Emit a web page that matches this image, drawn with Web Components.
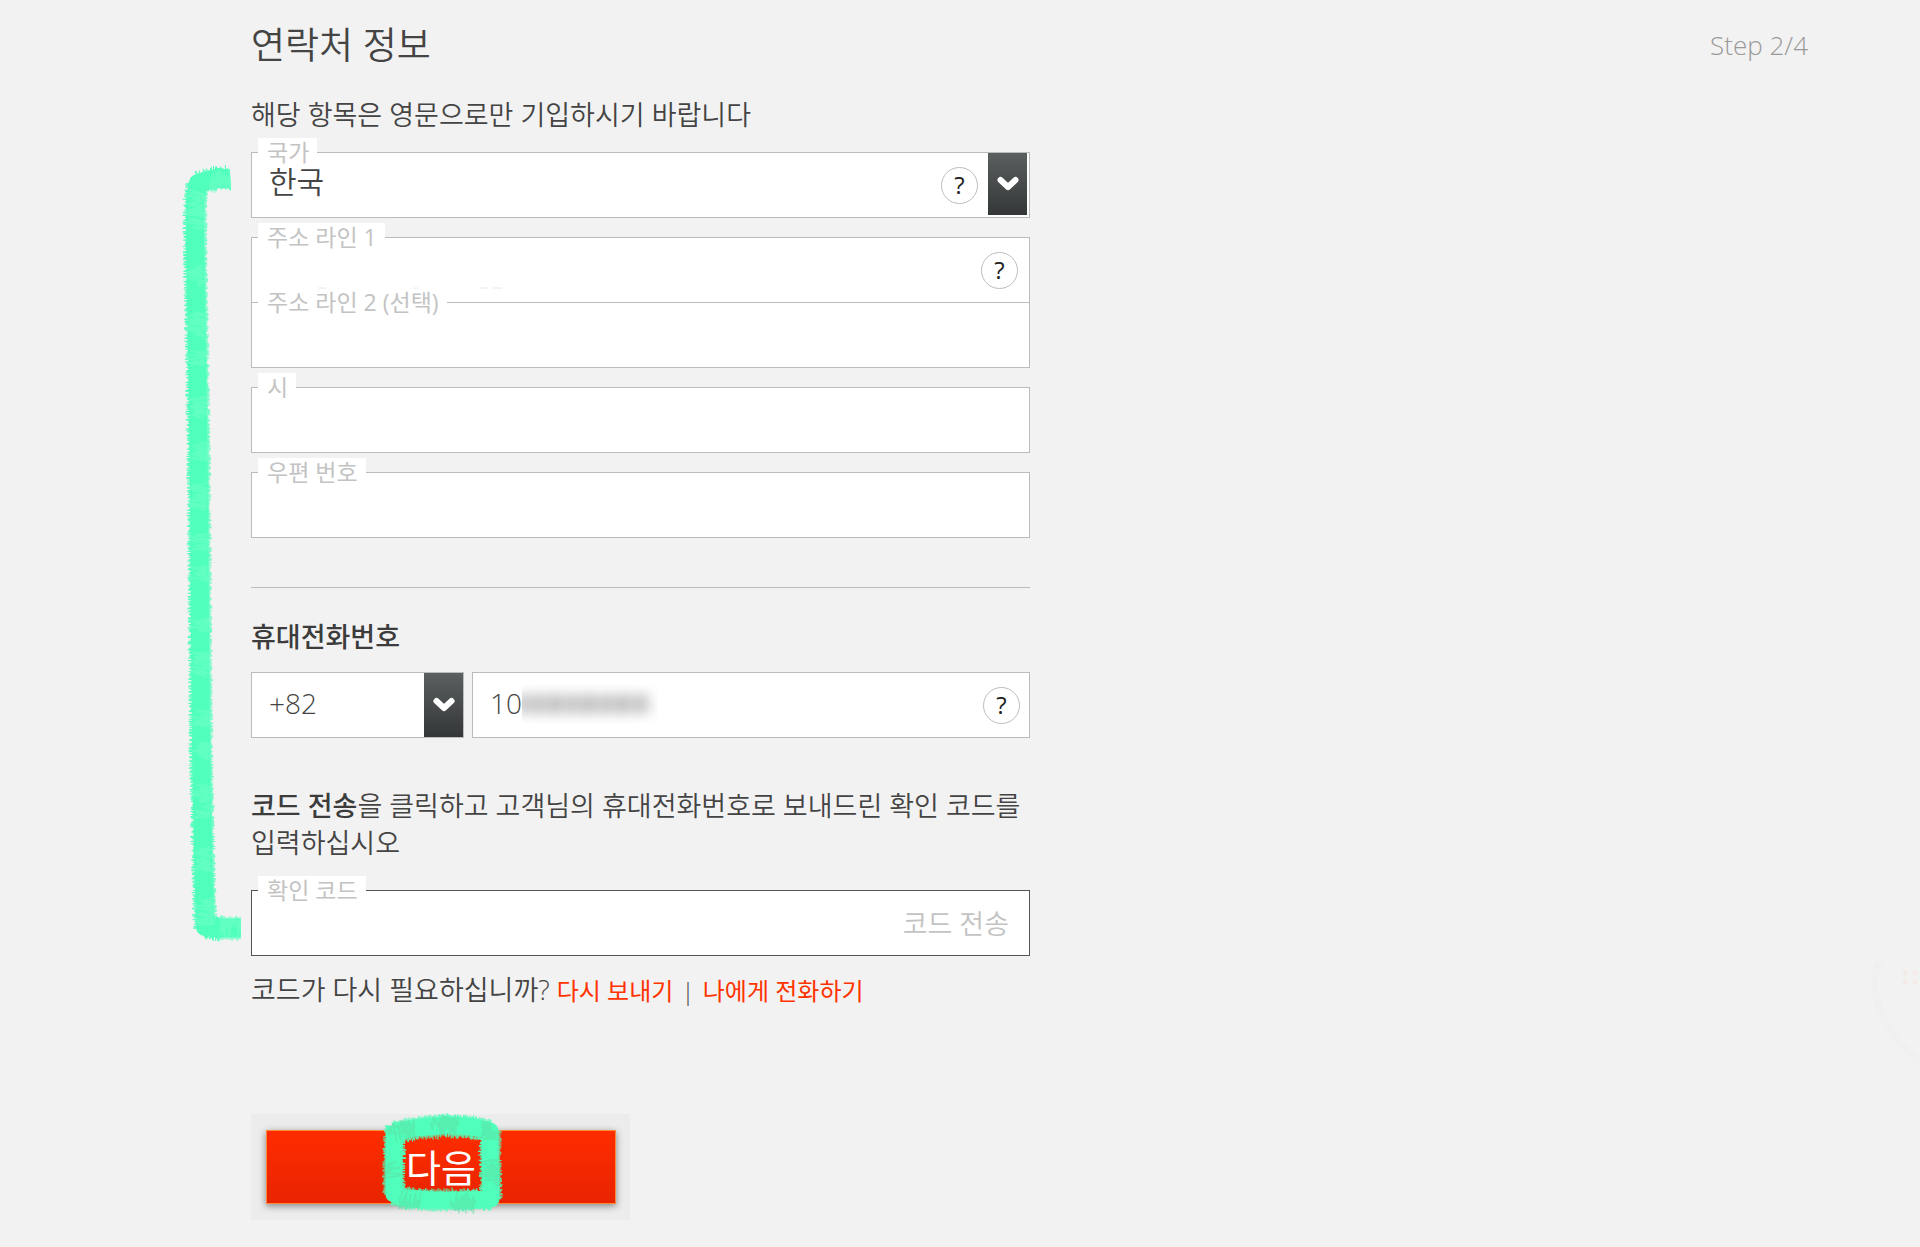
<!DOCTYPE html>
<html lang="ko">
<head>
<meta charset="utf-8">
<title>연락처 정보</title>
<style>
  body {
    margin: 0;
    background: #f2f2f2;
    color: #444;
    font: 350 27px/37px "Open Sans", "Noto Sans CJK KR", sans-serif;
    overflow-x: hidden;
  }
</style>
</head>
<body>
<contact-page></contact-page>

<script>
const sheet = `
  *, *::before, *::after { box-sizing: border-box; }
  button, input, select { font: inherit; color: inherit; margin: 0; border: 0; padding: 0; background: none; border-radius: 0; outline: 0; appearance: none; }
  button { cursor: pointer; }
`;

/* Small seeded generator, so that brush strokes always look the same */
function rng(seed) {
  return () => (seed = (seed * 16807) % 2147483647) / 2147483647;
}

class HelpTip extends HTMLElement {
  connectedCallback() {
    this.attachShadow({ mode: 'open' }).innerHTML = `<style>${sheet}
      :host { display: block; flex: none; }
      button { display: block; width: 37px; height: 37px; border: 1px solid #bdbdbd; border-radius: 50%; background: #fff; color: #222; font-size: 24px; line-height: 34px; font-weight: 400; text-align: center; }
    </style><button type="button" aria-label="도움말">?</button>`;
  }
}
customElements.define('help-tip', HelpTip);

class FormField extends HTMLElement {
  connectedCallback() {
    const label = this.getAttribute('label');
    const value = this.getAttribute('value') || '';
    const name = this.getAttribute('name');
    const select = this.hasAttribute('select');
    const control = select
      ? `<select id="c" name="${name}" ${label ? '' : `aria-label="${this.getAttribute('hint')}"`}><option>${value}</option></select>`
      : `<input id="c" type="text" name="${name}" value="${value}" ${label ? '' : `aria-label="${this.getAttribute('hint')}"`}>`;
    this.attachShadow({ mode: 'open' }).innerHTML = `<style>${sheet}
      :host { display: block; position: relative; min-width: 0; }
      .box { display: flex; align-items: center; height: 66px; border: 1px solid var(--line, #bcbcbc); background: #fff; }
      #c { flex: 1; min-width: 0; width: 0; height: 100%; padding: 0 0 4px 17px; font-size: 28px; font-weight: 300; }
      :host([large]) #c { font-size: 30px; font-weight: 350; padding-bottom: 8px; }
      label { position: absolute; left: 7px; top: -14px; padding: 0 8px 0 9px; height: 30px; background: #fff; color: #c3c3c3; font-size: 23px; line-height: 29px; white-space: nowrap; font-weight: 400; }
      .arrow { flex: none; align-self: stretch; width: 39px; display: grid; place-items: center; background: linear-gradient(#5a5f5f, #343737); pointer-events: none; }
      :host([large]) .arrow { margin: 0 2px 2px 0; }
    </style>
    <div class="box">${control}<slot></slot>${select ? `<span class="arrow"><svg width="24" height="18" viewBox="0 0 24 18"><path d="M4.500 5 L12 12 L19.500 5" fill="none" stroke="#fff" stroke-width="6" stroke-linecap="round" stroke-linejoin="round"/></svg></span>` : ''}</div>
    ${label ? `<label for="c">${label}</label>` : ''}`;
  }
}
customElements.define('form-field', FormField);

/* Hand-drawn marker: short bristles laid across a centre line */
class BrushMark extends HTMLElement {
  connectedCallback() {
    const points = this.getAttribute('points').trim().split(/\s+/).map(p => p.split(',').map(Number));
    const width = Number(this.getAttribute('thickness'));
    const rand = rng(Number(this.getAttribute('seed')));
    let base = '', light = '', core = '';
    let band = 0, on = false;
    points.forEach(([x, y], i) => {
      core += `${i ? 'L' : 'M'}${x} ${y}`;
      if (!i) return;
      const [px, py] = points[i - 1];
      const len = Math.hypot(x - px, y - py), ux = (x - px) / len, uy = (y - py) / len;
      for (let t = 0; t < len; t += 1) {
        const a = width / 2 - 1 + rand() * 3, b = width / 2 - 1 + rand() * 3, s = rand() * 3 - 1;
        const cx = px + ux * t, cy = py + uy * t;
        const seg = `M${(cx - uy * a).toFixed(1)} ${(cy + ux * a + s).toFixed(1)}L${(cx + uy * b).toFixed(1)} ${(cy - ux * b).toFixed(1)}`;
        base += seg;
        if (band-- <= 0) { band = 12 + rand() * 26; on = !on; }
        if (on) {
          const la = a * (rand() * 1.6 - .6), lb = b * (rand() * .5 + .5);
          light += `M${(cx - uy * la).toFixed(1)} ${(cy + ux * la).toFixed(1)}L${(cx + uy * lb).toFixed(1)} ${(cy - ux * lb + s * 2).toFixed(1)}`;
        }
      }
    });
    this.attachShadow({ mode: 'open' }).innerHTML = `<style>
      :host { display: block; position: absolute; pointer-events: none; }
      svg { display: block; overflow: visible; }
    </style>
    <svg width="1" height="1" fill="none" aria-hidden="true">
      <path d="${core}" stroke="#50ffbb" stroke-width="${width - 3}" stroke-linejoin="round"/>
      <path d="${base}" stroke="#50ffbb"/>
      <path d="${light}" stroke="${this.getAttribute('tint')}" stroke-width="2" opacity=".4"/>
    </svg>`;
  }
}
customElements.define('brush-mark', BrushMark);

class NextButton extends HTMLElement {
  connectedCallback() {
    this.attachShadow({ mode: 'open' }).innerHTML = `<style>${sheet}
      :host { display: block; position: relative; width: 379px; max-width: 100%; padding: 16px 14px 16px 15px; background: #ececec; }
      button { display: block; width: 100%; height: 74px; border: 1px solid #ff8a3c; background: linear-gradient(#ff2c00, #e82400); color: #fff; font-size: 38px; line-height: 72px; font-weight: 400; box-shadow: 0 2px 7px rgba(0,0,0,.45); }
      brush-mark { left: 0; top: 0; }
    </style>
    <button type="submit"><slot></slot></button>
    <brush-mark seed="77" thickness="20" tint="#5fd8a0" points="143,18 165,14 195,11 222,13 239,17 239,45 240,85 215,86 180,86 155,84 143,80 143,45 144,12"></brush-mark>`;
  }
}
customElements.define('next-button', NextButton);

/* Barely visible ring that runs off the right edge */
class FaintBadge extends HTMLElement {
  connectedCallback() {
    this.attachShadow({ mode: 'open' }).innerHTML = `<style>
      :host { display: block; position: absolute; right: 0; top: 900px; pointer-events: none; }
      svg { display: block; }
    </style>
    <svg width="50" height="170" fill="none" aria-hidden="true">
      <path d="M9 62Q2 82 6 98Q14 134 50 162" stroke="#f0f0f0" stroke-width="7"/>
      <g fill="#f4ebe8"><circle cx="35" cy="73" r="2.500"/><circle cx="45" cy="73" r="2.500"/><circle cx="35" cy="82" r="2.500"/><circle cx="45" cy="82" r="2.500"/></g>
    </svg>`;
  }
}
customElements.define('faint-badge', FaintBadge);

class ContactPage extends HTMLElement {
  connectedCallback() {
    this.attachShadow({ mode: 'open' }).innerHTML = `<style>${sheet}
      :host { display: block; position: relative; padding: 19px 112px 28px 251px; }
      header { display: flex; justify-content: space-between; align-items: center; height: 52px; }
      h1 { margin: 0; font-size: 37px; line-height: 52px; font-weight: 350; }
      .step { font-size: 26px; font-weight: 300; color: #999; }
      form { position: relative; width: 100%; max-width: 779px; }
      p { margin: 0; }
      .intro { padding: 25px 0 19px; }
      .group { display: flex; flex-direction: column; gap: 19px; }
      .joined { position: relative; }
      .joined form-field + form-field { margin-top: -1px; }
      .traces { position: absolute; left: 66px; top: 50px; }
      help-tip { margin-right: 11px; }
      [large] help-tip { margin-right: 10px; }
      hr { margin: 49px 0 0; border: 0; border-top: 1px solid #bcbcbc; }
      h2 { margin: 30px 0 17px; font-size: 27px; line-height: 37px; font-weight: 500; color: #3c3c3c; }
      .phone { display: grid; grid-template-columns: 213px 1fr; gap: 8px; }
      .phone help-tip { margin-right: 9px; }
      .number { position: relative; }
      .smudge { position: absolute; left: 50px; top: 13px; width: 136px; height: 38px; overflow: hidden; }
      .smudge::before { content: ""; position: absolute; inset: 9px 7px 9px -3px; background: repeating-linear-gradient(97deg, #b4b4b4 0 8px, #dadada 8px 16px, #c2c2c2 16px 27px, #e0e0e0 27px 33px); filter: blur(6px); }
      .note { padding: 49px 0 29px; }
      b { font-weight: 500; color: #3c3c3c; }
      .code { --line: #555; }
      .send { margin-right: 20px; color: #c3c3c3; font-size: 27px; font-weight: 350; }
      .again { padding: 15px 0 105px; }
      a { color: #ff3300; text-decoration: none; font-size: 24px; font-weight: 400; }
      .bar { font-size: 24px; margin: 0 2px; }
      .bracket { left: 0; top: 0; }
    </style>
    <header><h1>연락처 정보</h1><span class="step">Step 2/4</span></header>
    <form onsubmit="return false">
      <p class="intro">해당 항목은 영문으로만 기입하시기 바랍니다</p>
      <div class="group">
        <form-field select large label="국가" name="country" value="한국"><help-tip></help-tip></form-field>
        <div class="joined">
          <form-field label="주소 라인 1" name="address1"><help-tip></help-tip></form-field>
          <form-field label="주소 라인 2 (선택)" name="address2"></form-field>
          <svg class="traces" width="190" height="2" aria-hidden="true"><path d="M1 1h8M97 1h4M162 1h8M176 1h9" stroke="#e6e6e6"/></svg>
        </div>
        <form-field label="시" name="city"></form-field>
        <form-field label="우편 번호" name="zip"></form-field>
      </div>
      <hr>
      <h2>휴대전화번호</h2>
      <div class="phone">
        <form-field select hint="국가 번호" name="dial" value="+82"></form-field>
        <div class="number">
          <form-field hint="휴대전화번호" name="phone" value="10"><help-tip></help-tip></form-field>
          <span class="smudge"></span>
        </div>
      </div>
      <p class="note"><b>코드 전송</b>을 클릭하고 고객님의 휴대전화번호로 보내드린 확인 코드를<br>입력하십시오</p>
      <form-field class="code" label="확인 코드" name="code"><button class="send" type="button">코드 전송</button></form-field>
      <p class="again">코드가 다시 필요하십니까? <a href="#resend">다시 보내기</a><span class="bar"> | </span><a href="#call">나에게 전화하기</a></p>
      <next-button>다음</next-button>
      <brush-mark class="bracket" seed="4211" thickness="21" tint="#7dffd0" points="-21,107 -40,108 -53,112 -56,128 -56,170 -54,280 -52,420 -51,560 -50,680 -48,780 -46,856 -30,857 -10,857"></brush-mark>
    </form>
    <faint-badge></faint-badge>`;
  }
}
customElements.define('contact-page', ContactPage);
</script>
</body>
</html>
